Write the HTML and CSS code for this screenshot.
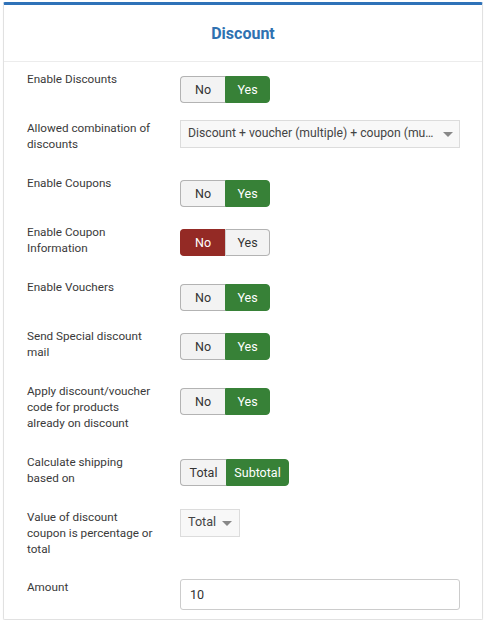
FILE: index.html
```html
<!DOCTYPE html>
<html>
<head>
<meta charset="utf-8">
<link rel="stylesheet" href="styles.css">
</head>
<body>
<div class="card">
  <div class="card-head"><h2 class="title">Discount</h2></div>
  <div class="card-body">
    <div class="row">
      <div class="label">Enable Discounts</div>
      <div class="ctrl"><div class="toggle"><span class="btn">No</span><span class="btn yes">Yes</span></div></div>
    </div>
    <div class="row">
      <div class="label">Allowed combination of discounts</div>
      <div class="ctrl"><div class="select wide"><span class="sel-text">Discount + voucher (multiple) + coupon (multiple)</span><span class="caret"></span></div></div>
    </div>
    <div class="row">
      <div class="label">Enable Coupons</div>
      <div class="ctrl"><div class="toggle"><span class="btn">No</span><span class="btn yes">Yes</span></div></div>
    </div>
    <div class="row">
      <div class="label">Enable Coupon Information</div>
      <div class="ctrl"><div class="toggle"><span class="btn no">No</span><span class="btn">Yes</span></div></div>
    </div>
    <div class="row">
      <div class="label">Enable Vouchers</div>
      <div class="ctrl"><div class="toggle"><span class="btn">No</span><span class="btn yes">Yes</span></div></div>
    </div>
    <div class="row">
      <div class="label">Send Special discount mail</div>
      <div class="ctrl"><div class="toggle"><span class="btn">No</span><span class="btn yes">Yes</span></div></div>
    </div>
    <div class="row">
      <div class="label">Apply discount/voucher code for products already on discount</div>
      <div class="ctrl"><div class="toggle"><span class="btn">No</span><span class="btn yes">Yes</span></div></div>
    </div>
    <div class="row">
      <div class="label">Calculate shipping based on</div>
      <div class="ctrl"><div class="toggle"><span class="btn total">Total</span><span class="btn yes sub">Subtotal</span></div></div>
    </div>
    <div class="row tall">
      <div class="label">Value of discount coupon is percentage or total</div>
      <div class="ctrl"><div class="select small"><span class="sel-text">Total</span><span class="caret"></span></div></div>
    </div>
    <div class="row last">
      <div class="label">Amount</div>
      <div class="ctrl"><div class="input">10</div></div>
    </div>
  </div>
</div>
</body>
</html>
```
FILE: styles.css
```css
* { box-sizing: border-box; }
html, body { margin: 0; padding: 0; background: #fff; }
body {
  font-family: Roboto, "Liberation Sans", sans-serif;
  font-size: 11.7px;
  line-height: 16px;
  color: #333;
  padding: 2px 6px 0 3px;
}
.card {
  width: 480px;
  border: 1px solid #e1e1e1;
  border-top: 3px solid #2f72b8;
  border-radius: 2px;
  box-shadow: 0 1px 1px rgba(0,0,0,0.08);
  height: 618px;
}
.card-head {
  height: 57px;
  border-bottom: 1px solid #ececec;
  display: flex;
  align-items: center;
  justify-content: center;
}
.title {
  margin: 0;
  font-size: 16px;
  font-weight: 700;
  color: #2f71b1;
  line-height: 20px;
  padding-top: 1px;
}
.card-body {
  padding: 9px 0 0 23px;
}
.row {
  display: flex;
  align-items: flex-start;
  margin-bottom: 17px;
}
.row.tall { margin-bottom: 16px; }
.label {
  width: 128px;
  margin-right: 25px;
  padding-bottom: 6px;
  flex: none;
  color: #3a3a3a;
}
.ctrl { flex: none; }
.toggle {
  display: flex;
  margin-top: 5px;
  height: 27px;
  font-size: 12.5px;
}
.btn {
  width: 45px;
  height: 27px;
  display: flex;
  align-items: center;
  justify-content: center;
  background: #f3f3f3;
  border: 1px solid #b3b3b3;
  color: #333;
}
.btn:first-child { border-radius: 4px 0 0 4px; border-right: none; }
.btn:last-child { border-radius: 0 4px 4px 0; }
.btn.yes { background: #378137; border-color: #378137; color: #fff; }
.btn.no { background: #942a25; border-color: #942a25; color: #fff; }
.btn:first-child + .btn { border-left: 1px solid #b3b3b3; }
.btn.yes:last-child { border-left-color: #378137; }
.btn.no + .btn { border-left: 1px solid #d0d0d0; }
.btn.total { width: 46px; }
.btn.sub { width: 63px; }
.select {
  height: 28px;
  background: #f8f8f8;
  border: 1px solid #dcdcdc;
  display: flex;
  align-items: center;
  padding: 0 6px 0 7px;
  font-size: 12.2px;
}
.select.wide { width: 280px; }
.select.small { width: 60px; padding-right: 9px; font-size: 12.6px; }
.sel-text {
  flex: 1;
  white-space: nowrap;
  overflow: hidden;
  text-overflow: ellipsis;
  color: #444;
  padding-bottom: 2px;
}
.select.small .sel-text { overflow: visible; }
.caret {
  width: 0; height: 0;
  border-left: 5px solid transparent;
  border-right: 5px solid transparent;
  border-top: 5px solid #888;
  margin-left: 8px;
  flex: none;
}
.select.small .caret { margin-left: 6px; }
.input {
  width: 280px;
  height: 31px;
  border: 1px solid #ccc;
  border-radius: 3px;
  display: flex;
  align-items: center;
  padding-left: 9px;
  font-size: 12.6px;
  color: #333;
}
```
